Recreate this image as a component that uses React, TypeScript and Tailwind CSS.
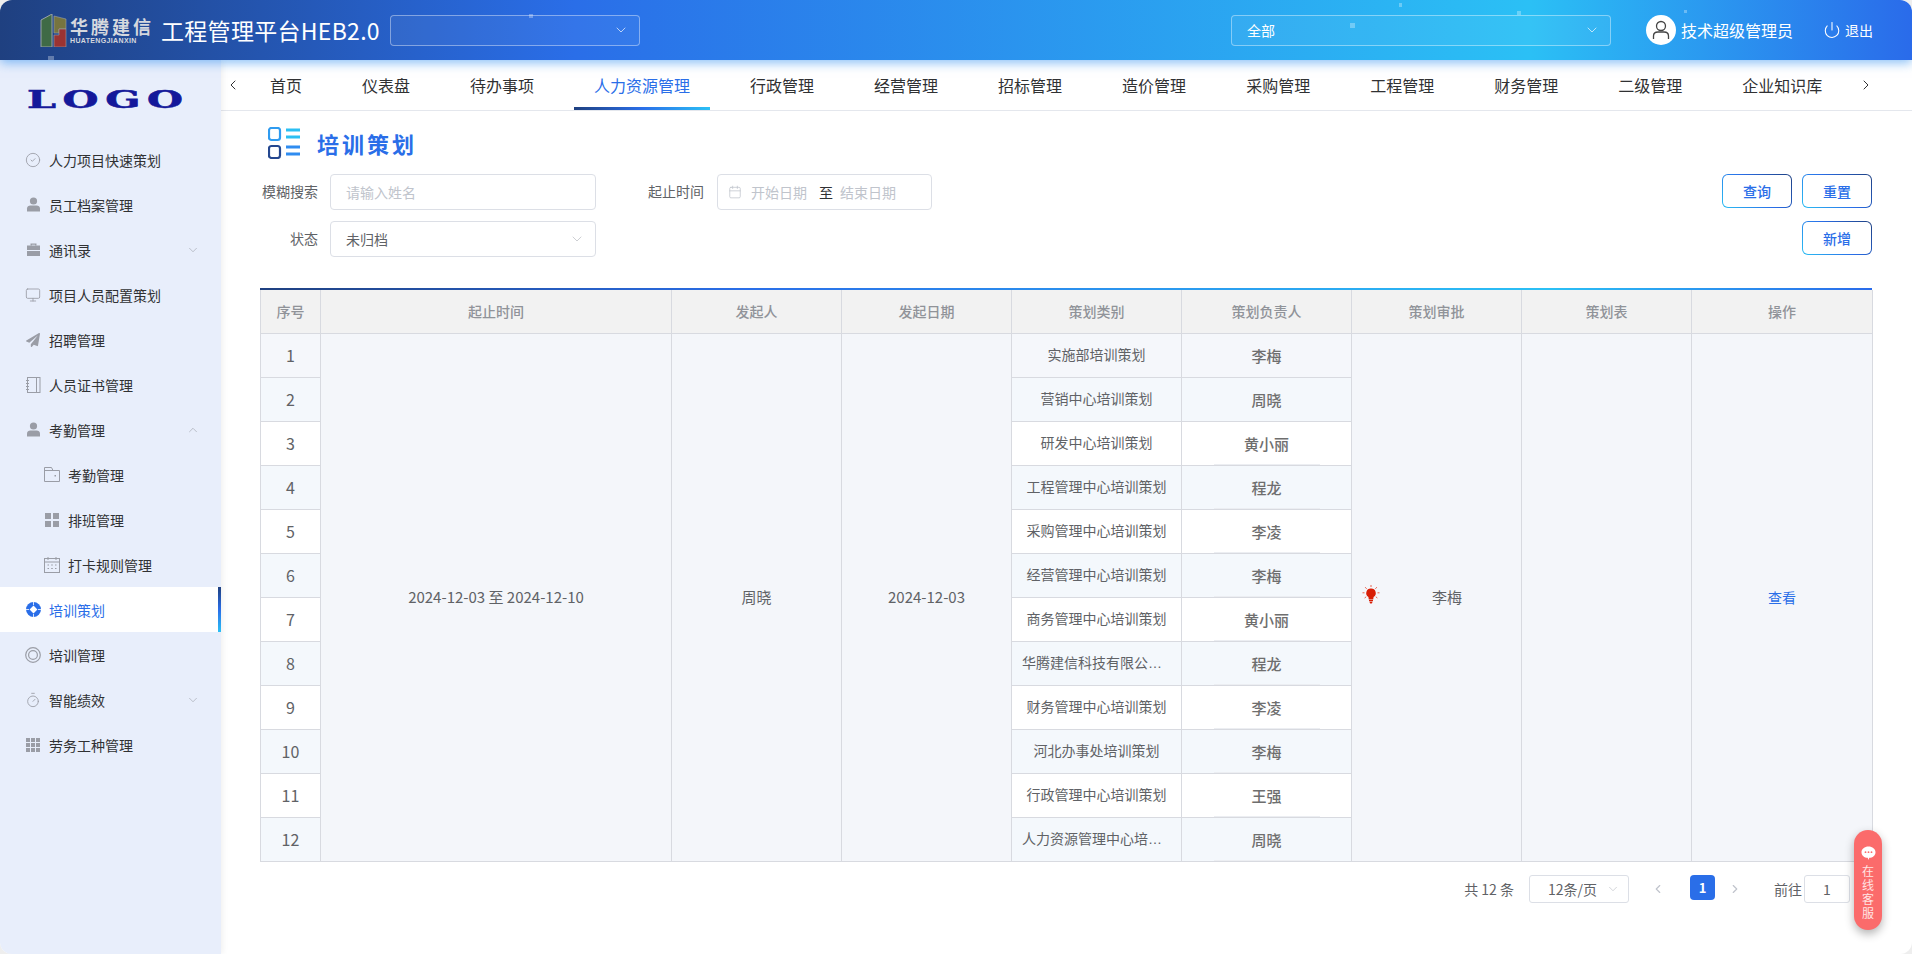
import { Calendar, ChevronDown, ChevronLeft, ChevronRight, ChevronUp, CircleCheck, Monitor, Power, Timer } from "lucide-react"
import { FaPaperPlane } from "react-icons/fa"
import type { ReactNode } from "react"

const gray = "#9a9da6"

function PersonIcon() {
    return (
        <svg width="15" height="15" viewBox="0 0 15 15" fill={gray}>
            <circle cx="7.5" cy="4" r="3.6" />
            <path d="M1 14.5V11.5C1 9.6 2.6 8.6 4.4 8.6H10.6C12.4 8.6 14 9.6 14 11.5V14.5Z" />
        </svg>
    )
}

function CaseIcon() {
    return (
        <svg width="15" height="15" viewBox="0 0 15 15" fill={gray}>
            <path d="M4.5 3.5V1.5H10.5V3.5H9V2.8H6V3.5Z" />
            <rect x="1" y="3.5" width="13" height="4.5" />
            <rect x="1" y="9" width="13" height="5" />
        </svg>
    )
}

function NotebookIcon() {
    return (
        <svg width="15" height="16" viewBox="0 0 15 16" fill="none" stroke={gray}>
            <rect x="1.5" y="0.5" width="12.5" height="15" />
            <path d="M10.5 1V15M0 3.5H3M0 6.5H3M0 9.5H3M0 12.5H3" />
        </svg>
    )
}

function FolderIcon() {
    return (
        <svg width="16" height="15" viewBox="0 0 16 15" fill="none" stroke={gray}>
            <path d="M0.5 14.5V0.5H7.5L9 3.5H15.5V14.5ZM0.5 3.5H9" />
            <rect x="10.5" y="8" width="1.5" height="1.5" fill={gray} stroke="none" />
        </svg>
    )
}

function SquaresIcon({ n }: { n: number }) {
    const cells = Array.from({ length: n * n })
    return (
        <div className={n === 2 ? "grid grid-cols-2 gap-[2px] w-[14px] h-[14px]" : "grid grid-cols-3 gap-[1px] w-[14px] h-[14px]"}>
            {cells.map((_, i) => <div key={i} className="bg-[#9a9da6]" />)}
        </div>
    )
}

function CalIcon() {
    return (
        <svg width="16" height="16" viewBox="0 0 16 16" fill="none" stroke={gray}>
            <rect x="0.5" y="1.5" width="15" height="14" />
            <path d="M0.5 5H15.5M4 0V3M12 0V3" />
            <path d="M3.5 8H5M7.2 8H8.8M11 8H12.5M3.5 11.5H5M7.2 11.5H8.8M11 11.5H12.5" />
        </svg>
    )
}

function ActiveIcon() {
    return (
        <svg width="15" height="15" viewBox="0 0 15 15">
            <circle cx="7.5" cy="7.5" r="7.5" fill="#2a6ee8" />
            <path d="M7.5 3.6L11.4 7.5L7.5 11.4L3.6 7.5Z" fill="#fff" />
            <path d="M7.5 0V3M7.5 12V15M0 7.5H3M12 7.5H15" stroke="#fff" strokeWidth="0.8" />
        </svg>
    )
}

function RingIcon() {
    return (
        <svg width="16" height="16" viewBox="0 0 16 16" fill="none" stroke={gray} strokeWidth="1.2">
            <circle cx="8" cy="8" r="7.3" />
            <circle cx="8" cy="8" r="4.4" />
        </svg>
    )
}

const thin = { size: 16, strokeWidth: 1.3, color: gray }

type NavItem = { label: string; icon: ReactNode; sub?: boolean; arrow?: "up" | "down"; active?: boolean }

const navItems: NavItem[] = [
    { label: "人力项目快速策划", icon: <CircleCheck {...thin} /> },
    { label: "员工档案管理", icon: <PersonIcon /> },
    { label: "通讯录", icon: <CaseIcon />, arrow: "down" },
    { label: "项目人员配置策划", icon: <Monitor {...thin} /> },
    { label: "招聘管理", icon: <FaPaperPlane size={14} color={gray} /> },
    { label: "人员证书管理", icon: <NotebookIcon /> },
    { label: "考勤管理", icon: <PersonIcon />, arrow: "up" },
    { label: "考勤管理", icon: <FolderIcon />, sub: true },
    { label: "排班管理", icon: <SquaresIcon n={2} />, sub: true },
    { label: "打卡规则管理", icon: <CalIcon />, sub: true },
    { label: "培训策划", icon: <ActiveIcon />, active: true },
    { label: "培训管理", icon: <RingIcon /> },
    { label: "智能绩效", icon: <Timer {...thin} />, arrow: "down" },
    { label: "劳务工种管理", icon: <SquaresIcon n={3} /> },
]

const tabs = ["首页", "仪表盘", "待办事项", "人力资源管理", "行政管理", "经营管理", "招标管理", "造价管理", "采购管理", "工程管理", "财务管理", "二级管理", "企业知识库"]

const rows = [
    ["实施部培训策划", "李梅"],
    ["营销中心培训策划", "周晓"],
    ["研发中心培训策划", "黄小丽"],
    ["工程管理中心培训策划", "程龙"],
    ["采购管理中心培训策划", "李凌"],
    ["经营管理中心培训策划", "李梅"],
    ["商务管理中心培训策划", "黄小丽"],
    ["华腾建信科技有限公司培训策划", "程龙"],
    ["财务管理中心培训策划", "李凌"],
    ["河北办事处培训策划", "李梅"],
    ["行政管理中心培训策划", "王强"],
    ["人力资源管理中心培训策划", "周晓"],
]

const heads = ["序号", "起止时间", "发起人", "发起日期", "策划类别", "策划负责人", "策划审批", "策划表", "操作"]
const colWidths = ["w-[60px]", "w-[351px]", "w-[170px]", "w-[170px]", "w-[170px]", "w-[170px]", "w-[170px]", "w-[170px]", "w-[181px]"]

const particles = [
    "left-[48px] top-[56px] w-[6px] h-[4px]",
    "left-[529px] top-[14px] w-[4px] h-[4px]",
    "left-[1399px] top-[3px] w-[3px] h-[4px]",
    "left-[1517px] top-[11px] w-[4px] h-[4px]",
    "left-[1350px] top-[23px] w-[5px] h-[5px]",
    "left-[1684px] top-[10px] w-[3px] h-[3px]",
]

function Header() {
    return (
        <header className="relative z-20 flex items-center h-[60px] shrink-0 pl-[40px] pr-[39px] text-white bg-[linear-gradient(90deg,#1f4080_0%,#2a6ee8_30%,#2bc0f5_80%,#2a6bea_100%)] shadow-[0_3px_10px_rgba(42,140,240,0.55)]">
            {particles.map(p => <span key={p} className={`absolute bg-white/30 ${p}`} />)}
            <svg width="27" height="33" viewBox="0 0 27 33" className="shrink-0">
                <path d="M1 6L12 0V33H1Z" fill="#3f6a46" stroke="#9aa3a8" strokeWidth="1" />
                <path d="M14 2L26 5V15H19V19H14Z" fill="#77743f" stroke="#9aa3a8" strokeWidth="0.6" />
                <path d="M14 21H19V15H26V33H14Z" fill="#9a3332" stroke="#9aa3a8" strokeWidth="0.6" />
            </svg>
            <div className="flex flex-col w-[82px] ml-[3px] text-[#d5d8de]">
                <span className="text-[18px] leading-[22px] font-bold tracking-[3px] whitespace-nowrap">华腾建信</span>
                <span className="text-[7px] leading-[8px] font-bold whitespace-nowrap tracking-[0.35px] font-['Liberation_Sans',sans-serif]">HUATENGJIANXIN</span>
            </div>
            <span className="ml-[9px] text-[23px] leading-none tracking-[0.3px] whitespace-nowrap">工程管理平台HEB2.0</span>
            <div className="ml-[10px] w-[250px] h-[31px] flex items-center justify-end pr-[10px] rounded border border-white/40 bg-white/5">
                <ChevronDown size={16} strokeWidth={1} />
            </div>
            <div className="ml-auto w-[380px] h-[31px] flex items-center justify-between px-[15px] pr-[10px] rounded border border-white/40 bg-white/5 text-sm">
                全部
                <ChevronDown size={16} strokeWidth={1} />
            </div>
            <div className="ml-[35px] w-[30px] h-[30px] rounded-full bg-white flex items-center justify-center">
                <svg width="18" height="20" viewBox="0 0 18 20" fill="none" stroke="#444" strokeWidth="1.3">
                    <circle cx="9" cy="6" r="4.5" />
                    <path d="M1.5 19V16C1.5 13.5 3.5 12 6 12H12C14.5 12 16.5 13.5 16.5 16V19" />
                </svg>
            </div>
            <span className="ml-[5px] text-base whitespace-nowrap">技术超级管理员</span>
            <Power size={18} strokeWidth={1.4} className="ml-[30px]" />
            <span className="ml-[4px] text-sm whitespace-nowrap">退出</span>
        </header>
    )
}

function Sidebar() {
    return (
        <aside className="relative z-10 w-[221px] shrink-0 bg-[#e8eefb] shadow-[2px_0_6px_rgba(0,0,0,0.06)]">
            <div className="h-[77px] pt-[23px] pr-[5px] flex justify-center">
                <span className="text-[25px] leading-[34px] font-black text-[#14189a] font-['DejaVu_Serif',serif] scale-x-[1.65] tracking-[4px] [-webkit-text-stroke:0.6px_#14189a]">LOGO</span>
            </div>
            {navItems.map((item, i) => (
                <div key={i} className={item.active
                    ? "relative h-[45px] flex items-center pl-[25px] pr-[21px] bg-white text-[#2a6ee8]"
                    : item.sub
                        ? "h-[45px] flex items-center pl-[44px] pr-[21px] text-[#303133]"
                        : "h-[45px] flex items-center pl-[25px] pr-[21px] text-[#303133]"}>
                    <span className="w-[16px] h-[16px] flex items-center justify-center shrink-0">{item.icon}</span>
                    <span className="ml-[8px] text-sm whitespace-nowrap">{item.label}</span>
                    {item.arrow === "down" && <ChevronDown size={14} strokeWidth={1} color="#9a9da6" className="ml-auto" />}
                    {item.arrow === "up" && <ChevronUp size={14} strokeWidth={1} color="#9a9da6" className="ml-auto" />}
                    {item.active && <span className="absolute right-0 top-0 bottom-0 w-[3px] bg-[linear-gradient(180deg,#1f4080,#2a6ee8,#2bc0f5)]" />}
                </div>
            ))}
        </aside>
    )
}

function Tabs() {
    return (
        <div className="h-[51px] shrink-0 flex items-center border-b border-[#e4e7ed] pl-[4px] pr-[38px] text-[#303133]">
            <ChevronLeft size={16} strokeWidth={1.5} className="shrink-0 -mr-[1px]" />
            <div className="flex flex-1">
                {tabs.map(t => (
                    <div key={t} className={t === "人力资源管理"
                        ? "relative h-[50px] px-[30px] flex items-center text-base whitespace-nowrap text-[#2a6ee8]"
                        : "h-[50px] px-[30px] flex items-center text-base whitespace-nowrap"}>
                        {t}
                        {t === "人力资源管理" && <span className="absolute left-[10px] right-[10px] bottom-0 h-[3px] bg-[linear-gradient(90deg,#1f4080,#2a6ee8,#2bc0f5)]" />}
                    </div>
                ))}
            </div>
            <ChevronRight size={16} strokeWidth={1.5} className="shrink-0" />
        </div>
    )
}

function GradientButton({ label }: { label: string }) {
    return (
        <button className="w-[70px] h-[34px] rounded-md text-sm font-medium text-[#2a6ee8] border border-transparent [background:linear-gradient(#fff,#fff)_padding-box,linear-gradient(45deg,#2bbff3,#2a6ee8,#1f4080)_border-box]">
            {label}
        </button>
    )
}

function Filters() {
    return (
        <div className="mt-[15px] flex justify-between">
            <div className="flex flex-col gap-[11px] text-sm">
                <div className="flex items-center h-[36px]">
                    <span className="w-[58px] text-right text-[#606266] -mt-[3px]">模糊搜索</span>
                    <div className="ml-[12px] w-[266px] h-[36px] flex items-center px-[15px] rounded border border-[#dcdfe6] text-[#c0c4cc]">请输入姓名</div>
                    <span className="ml-[52px] w-[56px] text-[#606266] -mt-[3px]">起止时间</span>
                    <div className="ml-[13px] w-[215px] h-[36px] flex items-center pl-[10px] rounded border border-[#dcdfe6] text-[#c0c4cc]">
                        <Calendar size={14} strokeWidth={1.3} />
                        <span className="ml-[9px]">开始日期</span>
                        <span className="ml-[12px] text-[#303133]">至</span>
                        <span className="ml-[7px]">结束日期</span>
                    </div>
                </div>
                <div className="flex items-center h-[36px]">
                    <span className="w-[58px] text-right text-[#606266] -mt-[3px]">状态</span>
                    <div className="ml-[12px] w-[266px] h-[36px] flex items-center justify-between pl-[15px] pr-[10px] rounded border border-[#dcdfe6] text-[#606266]">
                        未归档
                        <ChevronDown size={16} strokeWidth={1} color="#b4b7bd" />
                    </div>
                </div>
            </div>
            <div className="flex flex-col items-end gap-[13px]">
                <div className="flex gap-[10px]">
                    <GradientButton label="查询" />
                    <GradientButton label="重置" />
                </div>
                <GradientButton label="新增" />
            </div>
        </div>
    )
}

function Lamp() {
    return (
        <svg width="18" height="19" viewBox="0 0 18 19" className="-mt-[5px] shrink-0">
            <path d="M9 3.5A4.6 4.6 0 0 1 11.6 12L11.2 14.5H6.8L6.4 12A4.6 4.6 0 0 1 9 3.5Z" fill="#d81e06" />
            <rect x="7" y="15" width="4" height="1.3" fill="#d81e06" />
            <rect x="7.6" y="16.8" width="2.8" height="1.6" rx="0.8" fill="#d81e06" />
            <path d="M9 0V2M3.2 2.2L4.6 3.8M14.8 2.2L13.4 3.8M0.5 7.8H2.5M15.5 7.8H17.5M2.6 13L4.2 11.8M15.4 13L13.8 11.8" stroke="#e8503a" strokeWidth="0.9" />
        </svg>
    )
}

function PlanTable() {
    const cell = "border border-[#d8dae0] text-center text-sm text-[#606266]"
    const merged = "border border-[#d8dae0] text-center text-[15px] text-[#606266] bg-[#f4f6fa]"
    const tint = (i: number) => (i === 0 ? "bg-[#f5f7fb]" : i === 1 || i % 2 === 1 ? "bg-[#f4f8fc]" : "bg-white")
    return (
        <div className="mt-[31px]">
            <div className="h-[2px] bg-[linear-gradient(90deg,#1f4080_0%,#2a6ee8_30%,#2bc0f5_80%,#2a6bea_100%)]" />
            <table className="w-[1612px] table-fixed border-collapse">
                <colgroup>
                    {colWidths.map((w, i) => <col key={i} className={w} />)}
                </colgroup>
                <thead>
                    <tr className="h-[43px] bg-[#f2f2f2]">
                        {heads.map(h => <th key={h} className="border border-t-0 border-[#d8dae0] text-sm font-medium text-[#909399]">{h}</th>)}
                    </tr>
                </thead>
                <tbody>
                    {rows.map(([category, owner], i) => (
                        <tr key={i} className="h-[44px]">
                            <td className={`${cell} ${tint(i)} !text-base`}>{i + 1}</td>
                            {i === 0 && (
                                <>
                                    <td rowSpan={12} className={merged}>2024-12-03 至 2024-12-10</td>
                                    <td rowSpan={12} className={merged}>周晓</td>
                                    <td rowSpan={12} className={merged}>2024-12-03</td>
                                </>
                            )}
                            <td className={`${cell} ${tint(i)} px-[10px] truncate font-['Liberation_Sans','Noto_Sans_CJK_SC',sans-serif]`}>{category}</td>
                            <td className={`${cell} ${tint(i)}`}>
                                <div className={i > 1 ? "mx-auto w-[106px] h-[43px] leading-[43px] text-[15px] font-medium text-[#6e6e6e] border-b border-[#eceef2]" : "mx-auto w-[106px] h-[43px] leading-[43px] text-[15px] font-medium text-[#6e6e6e]"}>{owner}</div>
                            </td>
                            {i === 0 && (
                                <>
                                    <td rowSpan={12} className={merged}>
                                        <div className="flex items-center pl-[10px]">
                                            <Lamp />
                                            <span className="ml-[52px]">李梅</span>
                                        </div>
                                    </td>
                                    <td rowSpan={12} className={merged} />
                                    <td rowSpan={12} className={`${cell} bg-[#f4f6fa] !text-[#2a6ee8]`}>查看</td>
                                </>
                            )}
                        </tr>
                    ))}
                </tbody>
            </table>
        </div>
    )
}

function Pagination() {
    return (
        <div className="mt-[13px] pr-[22px] flex justify-end items-start text-sm text-[#606266] leading-[28px]">
            <span>共 12 条</span>
            <div className="ml-[15px] w-[100px] h-[28px] flex items-center justify-between pl-[18px] pr-[8px] rounded-[3px] border border-[#dcdfe6]">
                12条/页
                <ChevronDown size={14} strokeWidth={1} color="#b4b7bd" />
            </div>
            <div className="ml-[16px] w-[25px] h-[28px] flex items-center justify-center"><ChevronLeft size={14} strokeWidth={2} color="#c0c4cc" /></div>
            <div className="ml-[20px] w-[25px] h-[25px] rounded bg-[#2a6ee8] text-white font-bold text-[13px] leading-[25px] text-center">1</div>
            <div className="ml-[7px] w-[25px] h-[28px] flex items-center justify-center"><ChevronRight size={14} strokeWidth={2} color="#c0c4cc" /></div>
            <span className="ml-[27px]">前往</span>
            <div className="ml-[2px] w-[46px] h-[28px] rounded-[3px] border border-[#dcdfe6] text-center leading-[26px]">1</div>
        </div>
    )
}

export default function App() {
    return (
        <div className="h-screen bg-[#eeeeee] font-['Noto_Sans_CJK_SC','Liberation_Sans',sans-serif]">
            <div className="relative h-full flex flex-col bg-white rounded-xl overflow-hidden">
                <Header />
                <div className="flex flex-1 min-h-0">
                    <Sidebar />
                    <main className="flex-1 min-w-0 flex flex-col">
                        <Tabs />
                        <div className="pl-[39px] pr-[40px]">
                            <div className="mt-[16px] h-[32px] pl-[8px] flex items-center">
                                <svg width="32" height="32" viewBox="0 0 32 32" fill="none">
                                    <rect x="1" y="1" width="11" height="12" rx="2.5" stroke="#2f9bf0" strokeWidth="2.2" />
                                    <rect x="1" y="19" width="11" height="12" rx="2.5" stroke="#24478f" strokeWidth="2.2" />
                                    <path d="M18 3H32M18 10H32" stroke="#2bbff3" strokeWidth="3" />
                                    <path d="M18 20H32M18 27H32" stroke="#2f8cf0" strokeWidth="3" />
                                </svg>
                                <h1 className="ml-[17px] text-[22px] font-bold tracking-[3px] text-[#2a6ee8] whitespace-nowrap">培训策划</h1>
                            </div>
                            <Filters />
                            <PlanTable />
                            <Pagination />
                        </div>
                    </main>
                </div>
                <div className="absolute right-[30px] bottom-[24px] w-[28px] h-[100px] rounded-full bg-[#fb6b6b] shadow-[0_4px_10px_rgba(0,0,0,0.3)] flex flex-col items-center pt-[16px] text-[#ffe3e3]">
                    <svg width="15" height="15" viewBox="0 0 15 15">
                        <path d="M7.5 0.5C11.4 0.5 14.5 3 14.5 6.2C14.5 9.3 11.6 11.8 8.3 11.8L7.5 14L6.7 11.8C3.4 11.8 0.5 9.3 0.5 6.2C0.5 3 3.6 0.5 7.5 0.5Z" fill="#fff" />
                        <circle cx="4.5" cy="6.2" r="0.9" fill="#fb6b6b" />
                        <circle cx="7.5" cy="6.2" r="0.9" fill="#fb6b6b" />
                        <circle cx="10.5" cy="6.2" r="0.9" fill="#fb6b6b" />
                    </svg>
                    <div className="mt-[3px] w-[12px] text-[12px] leading-[14px] text-center">在线客服</div>
                </div>
            </div>
        </div>
    )
}
